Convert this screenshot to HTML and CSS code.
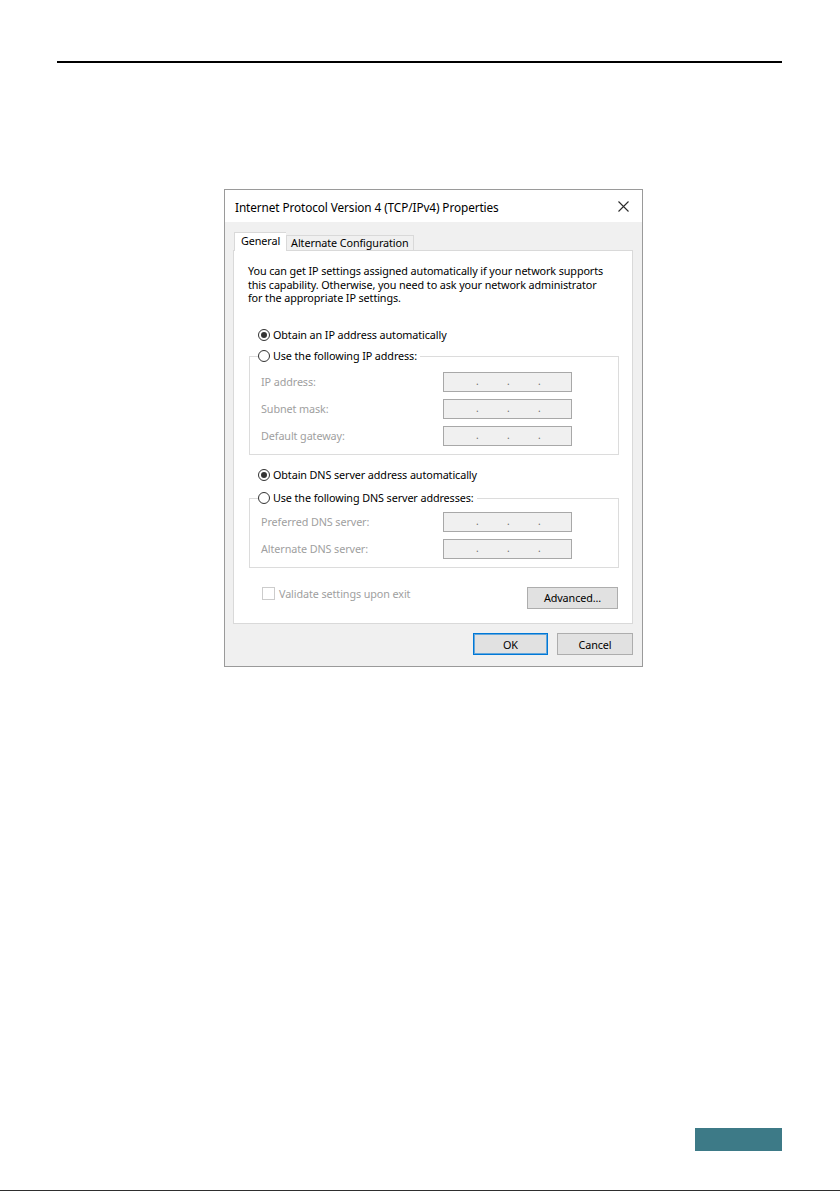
FILE: index.html
```html
<!DOCTYPE html>
<html lang="en">
<head>
<meta charset="utf-8">
<title>IPv4 Properties</title>
<link rel="stylesheet" href="styles.css">
</head>
<body>
<div class="page">
  <div class="rule"></div>
  <div class="dialog">
    <div class="titlebar">
      <span class="title">Internet Protocol Version 4 (TCP/IPv4) Properties</span>
      <svg class="close" width="11" height="11" viewBox="0 0 11 11"><path d="M0.5 0.5L10.5 10.5M10.5 0.5L0.5 10.5" stroke="#2b2b2b" stroke-width="1.1" fill="none"/></svg>
    </div>
    <div class="body">
      <div class="tabs">
        <div class="tab active">General</div>
        <div class="tab">Alternate Configuration</div>
      </div>
      <div class="panel">
        <p class="intro">You can get IP settings assigned automatically if your network supports<br>this capability. Otherwise, you need to ask your network administrator<br>for the appropriate IP settings.</p>
        <div class="option first"><span class="radio checked"></span><span>Obtain an IP address automatically</span></div>
        <div class="group">
          <div class="option legend"><span class="radio"></span><span>Use the following IP address:</span></div>
          <div class="fields">
            <span class="label">IP address:</span><span class="ipbox"><i>.</i><i>.</i><i>.</i></span>
            <span class="label">Subnet mask:</span><span class="ipbox"><i>.</i><i>.</i><i>.</i></span>
            <span class="label">Default gateway:</span><span class="ipbox"><i>.</i><i>.</i><i>.</i></span>
          </div>
        </div>
        <div class="option second"><span class="radio checked"></span><span>Obtain DNS server address automatically</span></div>
        <div class="group group2">
          <div class="option legend"><span class="radio"></span><span>Use the following DNS server addresses:</span></div>
          <div class="fields">
            <span class="label">Preferred DNS server:</span><span class="ipbox"><i>.</i><i>.</i><i>.</i></span>
            <span class="label">Alternate DNS server:</span><span class="ipbox"><i>.</i><i>.</i><i>.</i></span>
          </div>
        </div>
        <div class="footer">
          <div class="check"><span class="box"></span><span>Validate settings upon exit</span></div>
          <div class="btn advanced">Advanced...</div>
        </div>
      </div>
      <div class="actions">
        <div class="btn ok">OK</div>
        <div class="btn">Cancel</div>
      </div>
    </div>
  </div>
  <div class="pagenum"></div>
  <div class="bottomline"></div>
</div>
</body>
</html>
```
FILE: styles.css
```css
html, body {
  margin: 0;
  padding: 0;
  background: #ffffff;
}
body {
  width: 840px;
  height: 1192px;
  overflow: hidden;
  font-family: "Noto Sans", "DejaVu Sans", sans-serif;
  color: #000;
}
.page {
  display: flex;
  flex-direction: column;
}
.rule {
  height: 2px;
  background: #000;
  margin: 61px 58px 0 57px;
}
.dialog {
  width: 417px;
  height: 476px;
  margin: 126px 0 0 224px;
  border: 1px solid #9a9a9a;
  display: flex;
  flex-direction: column;
  background: #f0f0f0;
}
.titlebar {
  height: 32px;
  background: #fff;
  display: flex;
  align-items: center;
  justify-content: space-between;
  padding: 0 13px 0 10px;
}
.title {
  font-size: 11.8px;
  letter-spacing: -0.1px;
  color: #000;
  padding-top: 2px;
}
.close {
  display: block;
  margin-top: 1px;
}
.body {
  flex: 1;
  padding: 10px 8px 0 8px;
  display: flex;
  flex-direction: column;
}
.tabs {
  display: flex;
  align-items: flex-end;
  height: 18px;
  padding-left: 1px;
  position: relative;
  z-index: 1;
}
.tab {
  font-size: 10.8px;
  letter-spacing: -0.1px;
  height: 15px;
  line-height: 14px;
  padding: 0 4px;
  border: 1px solid #d9d9d9;
  border-bottom: none;
  background: #f0f0f0;
  box-sizing: border-box;
}
.tab.active {
  height: 19px;
  line-height: 16px;
  background: #fff;
  padding: 0 6px;
  margin-bottom: -1px;
  border-right: none;
}
.panel {
  width: 400px;
  height: 374px;
  box-sizing: border-box;
  border: 1px solid #d9d9d9;
  background: #fff;
  padding: 13px 13px 0 14px;
  display: flex;
  flex-direction: column;
}
.intro {
  margin: 0;
  font-size: 10.8px;
  line-height: 13.5px;
  letter-spacing: -0.1px;
  white-space: nowrap;
}
.option {
  display: flex;
  align-items: center;
  height: 14px;
  font-size: 10.8px;
  letter-spacing: -0.1px;
  gap: 3px;
}
.option.first {
  margin: 23px 0 0 10px;
}
.option.second {
  margin: 13px 0 0 10px;
}
.radio {
  width: 12px;
  height: 12px;
  box-sizing: border-box;
  border: 1px solid #333;
  border-radius: 50%;
  display: flex;
  align-items: center;
  justify-content: center;
  flex: none;
}
.radio.checked::after {
  content: "";
  width: 6px;
  height: 6px;
  border-radius: 50%;
  background: #333;
}
.group {
  margin: 14px 0 0 1px;
  width: 370px;
  box-sizing: border-box;
  border: 1px solid #dcdcdc;
  padding: 0 46px 8px 11px;
}
.group2 {
  margin-top: 16px;
  padding-bottom: 8px;
}
.option.legend {
  width: fit-content;
  background: #fff;
  margin: -8px 0 0 -3px;
  padding-right: 3px;
}
.fields {
  display: grid;
  grid-template-columns: 1fr 129px;
  grid-auto-rows: 20px;
  row-gap: 7px;
  margin-top: 9px;
  align-items: center;
}
.group2 .fields {
  margin-top: 7px;
}
.label {
  font-size: 10.8px;
  letter-spacing: -0.1px;
  color: #a0a0a0;
}
.ipbox {
  height: 20px;
  box-sizing: border-box;
  border: 1px solid #a8a8a8;
  background: #f0f0f0;
  display: flex;
  padding-left: 32px;
  gap: 28px;
  font-size: 10px;
  line-height: 17px;
  color: #6d6d6d;
}
.ipbox i {
  font-style: normal;
  width: 3px;
}
.footer {
  display: flex;
  justify-content: space-between;
  align-items: flex-start;
  margin-top: 19px;
  padding-left: 14px;
  width: 371px;
  box-sizing: border-box;
}
.check {
  display: flex;
  align-items: center;
  gap: 4px;
  height: 13px;
  font-size: 10.8px;
  letter-spacing: -0.1px;
  color: #a0a0a0;
}
.box {
  width: 13px;
  height: 13px;
  box-sizing: border-box;
  border: 1px solid #cccccc;
  background: #fff;
}
.btn {
  width: 76px;
  height: 22px;
  box-sizing: border-box;
  border: 1px solid #adadad;
  background: #e1e1e1;
  font-size: 10.8px;
  letter-spacing: -0.1px;
  display: flex;
  align-items: center;
  justify-content: center;
}
.btn.advanced {
  width: 91px;
  margin-right: 1px;
}
.actions {
  display: flex;
  justify-content: flex-end;
  gap: 9px;
  margin-top: 9px;
  width: 400px;
}
.btn.ok {
  width: 75px;
  border: 1px solid #0078d7;
  box-shadow: inset 0 0 0 1px rgba(0, 120, 215, 0.55);
}
.pagenum {
  width: 87px;
  height: 23px;
  background: #3d7a87;
  margin: 461px 0 0 695px;
}
.bottomline {
  height: 1px;
  background: #2e2e2e;
  margin-top: 39px;
}
```
